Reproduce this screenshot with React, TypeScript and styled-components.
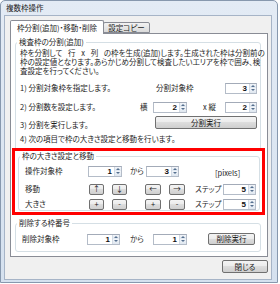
import styled, { createGlobalStyle } from 'styled-components';

const FONT = '"Noto Sans CJK JP", "Noto Sans", sans-serif';

const GlobalStyle = createGlobalStyle`
  html, body {
    margin: 0;
    padding: 0;
    background: #ffffff;
  }
  body {
    font-family: ${FONT};
    font-size: 7.5px;
    font-feature-settings: "palt";
    color: #1e1e1e;
  }
  * {
    box-sizing: border-box;
  }
`;

const Window = styled.div`
  width: 278px;
  height: 283px;
  display: flex;
  flex-direction: column;
  padding: 0 5px 2px 3px;
  background: linear-gradient(180deg, #e3ebf5 0%, #d5e1ef 100%);
  border: 1px solid #8798ae;
  border-radius: 5px 5px 0 0;
`;

const TitleBar = styled.div`
  height: 14px;
  line-height: 14px;
  padding-left: 2px;
  color: #1a1a1a;
`;

const Client = styled.div`
  height: 265px;
  display: flex;
  flex-direction: column;
  padding: 4px 3px 0 5px;
  background: #f0f0f0;
  border: 1px solid #a6b4c7;
`;

const TabStrip = styled.div`
  display: flex;
  align-items: flex-end;
  height: 13px;
  position: relative;
  z-index: 1;
`;

const Tab = styled.div<{ $active?: boolean; $w: number }>`
  width: ${(p) => p.$w}px;
  height: ${(p) => (p.$active ? 14 : 11)}px;
  margin-bottom: ${(p) => (p.$active ? -1 : 0)}px;
  margin-left: ${(p) => (p.$active ? 0 : -1)}px;
  display: flex;
  align-items: center;
  justify-content: center;
  white-space: nowrap;
  border: 1px solid #898c95;
  border-bottom: ${(p) => (p.$active ? 'none' : '1px solid #898c95')};
  border-radius: 2px 2px 0 0;
  background: ${(p) => (p.$active ? '#ffffff' : 'linear-gradient(180deg, #f3f3f3 0%, #e6e6e6 50%, #dadada 100%)')};
`;

const Panel = styled.div`
  height: 224px;
  padding: 4px 6px 0 4px;
  background: #ffffff;
  border: 1px solid #898c95;
`;

const Group = styled.fieldset<{ $pt: number; $pb: number; $pl: number; $pr: number; $mt?: number }>`
  margin: ${(p) => p.$mt ?? 0}px 0 0 0;
  padding: ${(p) => p.$pt}px ${(p) => p.$pr}px ${(p) => p.$pb}px ${(p) => p.$pl}px;
  min-width: 0;
  border: 1px solid #d5dfe5;
  border-radius: 3px;

  & > legend {
    margin-left: ${(p) => 1 - p.$pl}px;
  }
`;

const Caption = styled.legend`
  padding: 0 2px;
  height: 8px;
  line-height: 8px;
  white-space: nowrap;
`;

const Para = styled.p<{ $mt?: number }>`
  margin: ${(p) => p.$mt ?? 0}px 0 0 0;
  line-height: 9px;
  white-space: nowrap;
`;

const Spaced = styled.span`
  word-spacing: 4px;
`;

const Row = styled.div<{ $mt?: number; $h?: number }>`
  display: flex;
  align-items: center;
  height: ${(p) => p.$h ?? 12}px;
  margin-top: ${(p) => p.$mt ?? 0}px;
  white-space: nowrap;
`;

const Text = styled.span<{ $w?: number; $ml?: number; $pl?: number; $end?: boolean }>`
  flex: ${(p) => (p.$w ? `0 0 ${p.$w}px` : '1 1 auto')};
  margin-left: ${(p) => p.$ml ?? 0}px;
  padding-left: ${(p) => p.$pl ?? 0}px;
  line-height: 8px;
  align-self: ${(p) => (p.$end ? 'flex-end' : 'center')};
`;

const Spin = styled.div<{ $w: number; $ml?: number }>`
  flex: 0 0 ${(p) => p.$w}px;
  height: 11px;
  margin-left: ${(p) => p.$ml ?? 0}px;
  display: flex;
  background: #ffffff;
  border: 1px solid #b4bcc8;
  border-top-color: #a3abb8;
`;

const SpinValue = styled.span`
  flex: 1;
  text-align: right;
  padding-right: 2px;
  font-family: "Liberation Sans", Arial, sans-serif;
  font-weight: 700;
  font-size: 8px;
  line-height: 9px;
  color: #111;
`;

const Spinner = styled.div`
  display: flex;
  flex-direction: column;
  width: 7px;
  border-left: 1px solid #d3dbe5;
`;

const SpinHalf = styled.span<{ $down?: boolean }>`
  flex: 1;
  display: flex;
  align-items: center;
  justify-content: center;
  background: linear-gradient(180deg, #f2f5f9 0%, #dfe7f0 100%);

  &::after {
    content: '';
    border-left: 2px solid transparent;
    border-right: 2px solid transparent;
    ${(p) => (p.$down ? 'border-top: 2px solid #56708f;' : 'border-bottom: 2px solid #56708f;')}
  }
`;

const Button = styled.button<{ $w: number; $h?: number; $ml?: number }>`
  flex: 0 0 ${(p) => p.$w}px;
  width: ${(p) => p.$w}px;
  height: ${(p) => p.$h ?? 11}px;
  margin: 0 0 0 ${(p) => p.$ml ?? 0}px;
  padding: 0;
  display: flex;
  align-items: center;
  justify-content: center;
  font-family: ${FONT};
  font-size: 7.5px;
  font-feature-settings: "palt";
  line-height: 1;
  color: #1a1a1a;
  border: 1px solid #707070;
  border-radius: 2px;
  background: linear-gradient(180deg, #f4f4f4 0%, #ececec 45%, #dddddd 50%, #cfcfcf 100%);
`;

const Highlight = styled.div`
  margin: 5px -8px -3px -8px;
  padding: 1px 2px 1px 3px;
  border: 3px solid #ff0000;
  background: #ffffff;
`;

const Footer = styled.div`
  display: flex;
  justify-content: flex-end;
  margin-top: 3px;
`;

const SpinBox = ({ value, w, ml }: { value: string; w: number; ml?: number }) => (
  <Spin $w={w} $ml={ml}>
    <SpinValue>{value}</SpinValue>
    <Spinner>
      <SpinHalf />
      <SpinHalf $down />
    </Spinner>
  </Spin>
);

const StepRow = ({
  label, mt, keys,
}: { label: string; mt: number; keys: string[] }) => (
  <Row $mt={mt}>
    <Text $w={64}>{label}</Text>
    <Button $w={15}>{keys[0]}</Button>
    <Button $w={15} $ml={8}>{keys[1]}</Button>
    <Button $w={16} $ml={18}>{keys[2]}</Button>
    <Button $w={16} $ml={8}>{keys[3]}</Button>
    <Text $w={28} $ml={10}>ステップ</Text>
    <SpinBox value="5" w={33} />
  </Row>
);

export default function App() {
  return (
    <>
      <GlobalStyle />
      <Window>
        <TitleBar>複数枠操作</TitleBar>
        <Client>
          <TabStrip>
            <Tab $active $w={94}>枠分割(追加)・移動・削除</Tab>
            <Tab $w={47}>設定コピー</Tab>
          </TabStrip>
          <Panel>
            <Group $pt={2} $pb={0} $pl={4} $pr={3}>
              <Caption>検査枠の分割(追加)</Caption>
              <Para>
                <Spaced>枠を分割して 行 x 列 の枠を生成(追加)します。</Spaced>
                生成された枠は分割前の
                <br />
                枠の設定値となります。あらかじめ分割して検査したいエリアを枠で囲み、検
                <br />
                査設定を行ってください。
              </Para>
              <Row $mt={7}>
                <Text>1) 分割対象枠を指定します。</Text>
                <Text $w={69}>分割対象枠</Text>
                <SpinBox value="3" w={32} />
              </Row>
              <Row $mt={7}>
                <Text>2) 分割数を設定します。</Text>
                <Text $w={13}>横</Text>
                <SpinBox value="2" w={34} />
                <Text $w={38} $pl={16}>x 縦</Text>
                <SpinBox value="2" w={32} />
              </Row>
              <Row $mt={3} $h={13}>
                <Text $end>3) 分割を実行します。</Text>
                <Button $w={102} $h={13}>分割実行</Button>
              </Row>
              <Para $mt={5}>4) 次の項目で枠の大きさ設定と移動を行います。</Para>
              <Highlight>
                <Group $pt={5} $pb={0} $pl={6} $pr={3}>
                  <Caption>枠の大きさ設定と移動</Caption>
                  <Row>
                    <Text $w={63}>操作対象枠</Text>
                    <SpinBox value="1" w={34} />
                    <Text $w={16} $ml={8}>から</Text>
                    <SpinBox value="3" w={33} $ml={8} />
                    <Text $ml={36} $end>[pixels]</Text>
                  </Row>
                  <StepRow label="移動" mt={6} keys={['↑', '↓', '←', '→']} />
                  <StepRow label="大きさ" mt={3} keys={['+', '-', '+', '-']} />
                </Group>
              </Highlight>
            </Group>
            <Group $pt={6} $pb={6} $pl={6} $pr={3} $mt={6}>
              <Caption>削除する枠番号</Caption>
              <Row>
                <Text $w={65}>削除対象枠</Text>
                <SpinBox value="1" w={33} />
                <Text $w={23} $ml={10}>から</Text>
                <SpinBox value="1" w={34} />
                <Button $w={47} $h={12} $ml={21}>削除実行</Button>
              </Row>
            </Group>
          </Panel>
          <Footer>
            <Button $w={46} $h={13}>閉じる</Button>
          </Footer>
        </Client>
      </Window>
    </>
  );
}
